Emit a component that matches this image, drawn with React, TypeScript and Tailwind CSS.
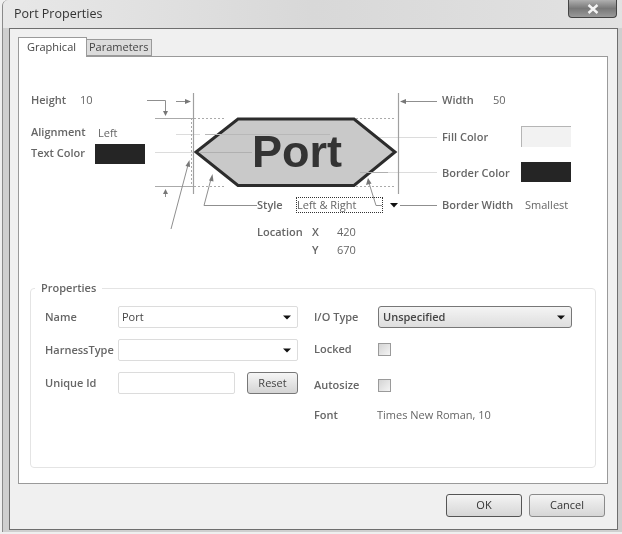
import type { ReactNode } from 'react';

const labelClass = "text-[11px] leading-[14px] font-semibold text-[#666] whitespace-nowrap";
const valueClass = "text-[11px] leading-[14px] text-[#666] whitespace-nowrap";

function DropArrow() {
  return (
    <svg width="8" height="5" viewBox="0 0 8 5">
      <path d="M0 0.5H8L4 4.5Z" fill="#111" />
    </svg>
  );
}

function Combo({ value }: { value?: string }) {
  return (
    <div className="h-[22px] w-[180px] flex items-center justify-between pl-[3px] pr-[6px] bg-white border border-[#dcdcdc] rounded-[2px] text-[11px] text-[#444]">
      <span>{value}</span>
      <DropArrow />
    </div>
  );
}

function FieldRow({ label, children }: { label: string; children: ReactNode }) {
  return (
    <div className="flex items-center h-[22px]">
      <span className={`${labelClass} w-[73px]`}>{label}</span>
      {children}
    </div>
  );
}

function Checkbox() {
  return <div className="size-[13px] border border-[#9a9a9a] bg-gradient-to-br from-[#d4d4d4] to-[#f4f4f4]" />;
}

function PortDiagram() {
  return (
    <div className="relative h-[216px]">
      <svg className="absolute inset-0" width="588" height="216" viewBox="19 57 588 216" fill="none">
        <g stroke="#dcdcdc" strokeWidth="1">
          <path d="M155 152.5H193M176 134.5H200M353 137.5H437M360 172.5H437" />
        </g>
        <path d="M238 119H354L395 152L354 185.5H238L196 152Z" fill="#c9c9c9" stroke="#2c2c2c" strokeWidth="3" />
        <path d="M205 134.5H330" stroke="#b8b8b8" />
        <path d="M199 152.5H252M360 172.5H388" stroke="#b0b0b0" />
        <text x="297" y="167" textAnchor="middle" fontFamily="'Liberation Sans', sans-serif" fontWeight="700" fontSize="45" fill="#333">Port</text>
        <g stroke="#8f8f8f" strokeWidth="1">
          <path d="M155 118.5H193M155 186.5H193" stroke="#aaa" />
          <path d="M193.5 93V194M398.5 93V194" stroke="#a0a0a0" strokeWidth="1.2" />
          <path d="M147 100.5H165.5V112" />
          <path d="M176 101.5H186" />
          <path d="M165.5 192V197" />
          <path d="M171 229L188 165" />
          <path d="M257 205.5H204L211 179" />
          <path d="M382 205.5H376L369 183" />
          <path d="M437 101.5H404" />
          <path d="M400 205.5H437" />
        </g>
        <path d="M191.5 118V186" stroke="#aaa" strokeDasharray="2 2" />
        <path d="M194 118.5H225M194 186.5H225" stroke="#aaa" strokeDasharray="2 2" />
        <path d="M356 118.5H395M356 186.5H395" stroke="#aaa" strokeDasharray="2 2" />
        <g fill="#777">
          <path d="M165.5 116L163 111H168Z" />
          <path d="M191 101.5L185 99V104Z" />
          <path d="M165.5 189L163 194H168Z" />
          <path d="M189.5 160L185.5 166L190 167Z" />
          <path d="M212.5 174L209 180.5L213.5 181.5Z" />
          <path d="M368 178L366 185L371.5 183.5Z" />
          <path d="M400 101.5L406 99V104Z" />
        </g>
        <path d="M390 203H398L394 207.5Z" fill="#111" />
      </svg>

      <span className={`${labelClass} absolute left-[12px] top-[36px]`}>Height</span>
      <span className={`${valueClass} absolute left-[61px] top-[36px]`}>10</span>
      <span className={`${labelClass} absolute left-[12px] top-[68px]`}>Alignment</span>
      <span className={`${valueClass} absolute left-[79px] top-[69px]`}>Left</span>
      <span className={`${labelClass} absolute left-[12px] top-[89px]`}>Text Color</span>
      <div className="absolute left-[76px] top-[87px] w-[50px] h-[20px] bg-[#252525]" />

      <span className={`${labelClass} absolute left-[423px] top-[36px]`}>Width</span>
      <span className={`${valueClass} absolute left-[474px] top-[36px]`}>50</span>
      <span className={`${labelClass} absolute left-[423px] top-[73px]`}>Fill Color</span>
      <div className="absolute left-[502px] top-[69px] w-[50px] h-[21px] bg-[#f2f2f2] border-t border-l border-[#b5b5b5]" />
      <span className={`${labelClass} absolute left-[423px] top-[109px]`}>Border Color</span>
      <div className="absolute left-[502px] top-[105px] w-[50px] h-[20px] bg-[#252525]" />
      <span className={`${labelClass} absolute left-[423px] top-[141px]`}>Border Width</span>
      <span className={`${valueClass} absolute left-[506px] top-[141px]`}>Smallest</span>

      <span className={`${labelClass} absolute left-[238px] top-[141px]`}>Style</span>
      <div className={`${valueClass} absolute left-[277px] top-[140px] w-[87px] h-[16px] border border-dotted border-[#333]`}>Left &amp; Right</div>
      <span className={`${labelClass} absolute left-[238px] top-[168px]`}>Location</span>
      <span className={`${labelClass} absolute left-[293px] top-[168px]`}>X</span>
      <span className={`${valueClass} absolute left-[318px] top-[168px]`}>420</span>
      <span className={`${labelClass} absolute left-[293px] top-[186px]`}>Y</span>
      <span className={`${valueClass} absolute left-[318px] top-[186px]`}>670</span>
    </div>
  );
}

function PropertiesGroup() {
  return (
    <div className="relative mx-[11px] mt-[15px] h-[180px] border border-[#e4e4e4] rounded-[4px] pt-[17px] pl-[14px] flex">
      <span className={`${labelClass} absolute left-[4px] top-[-8px] px-[6px] bg-white text-[#555]`}>Properties</span>

      <div className="w-[269px] flex flex-col gap-[11px]">
        <FieldRow label="Name"><Combo value="Port" /></FieldRow>
        <FieldRow label="HarnessType"><Combo /></FieldRow>
        <FieldRow label="Unique Id">
          <div className="w-[117px] h-[22px] bg-white border border-[#dcdcdc] rounded-[2px]" />
          <button className="ml-[12px] w-[51px] h-[22px] border border-[#777] rounded-[3px] bg-gradient-to-b from-[#f6f6f6] to-[#d4d4d4] text-[11px] text-[#444]">Reset</button>
        </FieldRow>
      </div>

      <div className="flex flex-col">
        <div className="flex items-center h-[22px]">
          <span className={`${labelClass} w-[64px]`}>I/O Type</span>
          <div className="w-[194px] h-[22px] flex items-center justify-between pl-[4px] pr-[6px] border border-[#777] rounded-[3px] bg-gradient-to-b from-[#f4f4f4] to-[#dedede] text-[11px] font-semibold text-[#444]">
            <span>Unspecified</span>
            <DropArrow />
          </div>
        </div>
        <div className="flex items-center h-[22px] mt-[10px]">
          <span className={`${labelClass} w-[64px]`}>Locked</span>
          <Checkbox />
        </div>
        <div className="flex items-center h-[22px] mt-[14px]">
          <span className={`${labelClass} w-[64px]`}>Autosize</span>
          <Checkbox />
        </div>
        <div className="flex items-center h-[22px] mt-[8px]">
          <span className={`${labelClass} w-[63px]`}>Font</span>
          <span className={valueClass}>Times New Roman, 10</span>
        </div>
      </div>
    </div>
  );
}

export default function App() {
  return (
    <div className="w-[622px] h-[534px] overflow-hidden bg-[#efefef] pl-[2px] blur-[0.4px] font-['Open_Sans','Noto_Sans',sans-serif]">
      <div className="h-[532px] flex flex-col bg-[#cfcfcf] border-l border-[#8a8a8a] rounded-tl-[6px] overflow-hidden">
        {/* title bar */}
        <div className="h-[28px] shrink-0 flex items-start justify-between pl-[11px] pr-[5px] bg-gradient-to-r from-[#e8e8e8] via-[#d8d8d8] to-[#e2e2e2]">
          <span className="mt-[6px] text-[12.5px] leading-[16px] text-[#333]">Port Properties</span>
          <div className="w-[49px] h-[18px] flex items-center justify-center border border-t-0 border-[#444] rounded-b-[4px] bg-gradient-to-b from-[#b0b0b0] via-[#787878] to-[#9a9a9a]">
            <svg width="12" height="10" viewBox="0 0 12 10">
              <path d="M1.5 1L10.5 9M10.5 1L1.5 9" stroke="#f4f4f4" strokeWidth="2.4" />
            </svg>
          </div>
        </div>

        {/* client area */}
        <div className="ml-[6px] mr-[4px] h-[502px] flex flex-col bg-[#f0f0f0] border border-[#6e6e6e] pt-[8px] pl-[8px] pr-[9px]">
          <div className="flex items-end h-[19px] relative z-10">
            <div className="w-[69px] h-[20px] mb-[-1px] pl-[8px] pt-[2px] bg-white border border-b-0 border-[#9a9a9a] text-[11px] leading-[14px] text-[#444]">Graphical</div>
            <div className="w-[65px] h-[17px] pl-[2px] bg-[#dcdcdc] border border-l-0 border-[#9a9a9a] text-[11px] leading-[14px] text-[#444]">Parameters</div>
          </div>
          <div className="h-[428px] bg-white border border-[#9a9a9a]">
            <PortDiagram />
            <PropertiesGroup />
          </div>
          <div className="flex justify-end gap-[7px] mt-[10px] pr-[3px]">
            <button className="w-[76px] h-[23px] border border-[#555] rounded-[3px] bg-gradient-to-b from-[#f4f4f4] to-[#d6d6d6] text-[11px] text-[#333]">OK</button>
            <button className="w-[76px] h-[23px] border border-[#8a8a8a] rounded-[3px] bg-gradient-to-b from-[#f4f4f4] to-[#d6d6d6] text-[11px] text-[#333]">Cancel</button>
          </div>
        </div>
      </div>
    </div>
  );
}
